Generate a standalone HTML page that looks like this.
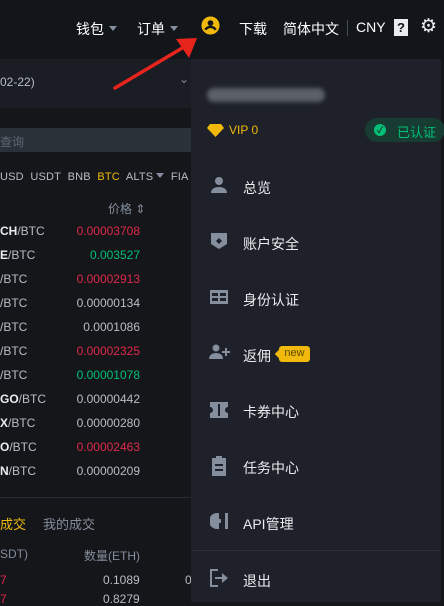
<!DOCTYPE html>
<html><head><meta charset="utf-8"><style>
*{margin:0;padding:0;box-sizing:border-box}
body{width:444px;height:602px;overflow:hidden;background:#14161a;font-family:"Liberation Sans","Noto Sans CJK SC",sans-serif;position:relative;color:#eaecef}
.a{position:absolute;white-space:nowrap}
.top{left:0;top:0;width:444px;height:59px;background:#12151a}
.nav{top:19px;font-size:14px;color:#fff}
.tri{display:inline-block;width:0;height:0;border-left:4px solid transparent;border-right:4px solid transparent;border-top:5px solid #848e9c;vertical-align:middle;margin-left:5px;margin-top:-3px}
.row{left:0;font-size:12px;color:#b7bdc6;width:180px}
.row b{color:#eaecef;font-weight:bold}
.row span{position:absolute;right:40px}
.r{color:#e0294a}.g{color:#02c076}.w{color:#b7bdc6}
.panel{left:191px;top:59px;width:250px;height:543px;background:#1e2129}
.mi{left:243px;font-size:14px;color:#eaecef}
.ic{position:absolute;left:210px}
</style></head><body>
<div class="a top"></div>
<div class="a nav" style="left:76px">钱包<span class="tri"></span></div>
<div class="a nav" style="left:137px">订单<span class="tri"></span></div>
<svg class="a" style="left:201px;top:16px" width="19" height="19" viewBox="0 0 20 20"><circle cx="10" cy="10" r="9.5" fill="#f0b90b"/><circle cx="10" cy="7.5" r="3" fill="#12151a"/><path d="M4.5 14.5c1.2-2 3-3 5.5-3s4.3 1 5.5 3" stroke="#12151a" stroke-width="2.5" fill="none"/></svg>
<div class="a nav" style="left:239px">下载</div>
<div class="a nav" style="left:283px">简体中文</div>
<div class="a" style="left:347px;top:20px;width:1px;height:16px;background:#474d57"></div>
<div class="a nav" style="left:356px">CNY</div>
<div class="a" style="left:394px;top:19px;width:14px;height:17px;background:#eaecef;color:#12151a;font-size:13px;font-weight:bold;text-align:center;line-height:17px">?</div>
<div class="a" style="left:420px;top:15px;font-size:19px;color:#eaecef">⚙</div>
<div class="a" style="left:0;top:59px;width:191px;height:49px;background:#1a1d23"></div>
<div class="a" style="left:0;top:75px;font-size:12px;color:#b7bdc6">02-22)</div>
<div class="a" style="left:179px;top:72px;font-size:12px;color:#848e9c">⌄</div>
<div class="a" style="left:0;top:128px;width:191px;height:24px;background:#2b3139"></div>
<div class="a" style="left:0;top:133px;font-size:12px;color:#5e6673">查询</div>
<div class="a" style="left:0;top:171px;font-size:11px;color:#b7bdc6;letter-spacing:.2px">USD&nbsp; USDT&nbsp; BNB&nbsp; <span style="color:#f0b90b">BTC</span>&nbsp; ALTS<span class="tri" style="margin-left:3px"></span>&nbsp; FIA</div>
<div class="a" style="left:108px;top:200px;font-size:12px;color:#848e9c">价格 ⇕</div>
<div class="a row" style="top:224px"><b>CH</b>/BTC<span class="r">0.00003708</span></div>
<div class="a row" style="top:248px"><b>E</b>/BTC<span class="g">0.003527</span></div>
<div class="a row" style="top:272px">/BTC<span class="r">0.00002913</span></div>
<div class="a row" style="top:296px">/BTC<span class="w">0.00000134</span></div>
<div class="a row" style="top:320px">/BTC<span class="w">0.0001086</span></div>
<div class="a row" style="top:344px">/BTC<span class="r">0.00002325</span></div>
<div class="a row" style="top:368px">/BTC<span class="g">0.00001078</span></div>
<div class="a row" style="top:392px"><b>GO</b>/BTC<span class="w">0.00000442</span></div>
<div class="a row" style="top:416px"><b>X</b>/BTC<span class="w">0.00000280</span></div>
<div class="a row" style="top:440px"><b>O</b>/BTC<span class="r">0.00002463</span></div>
<div class="a row" style="top:464px"><b>N</b>/BTC<span class="w">0.00000209</span></div>
<div class="a" style="left:0;top:497px;width:191px;height:1px;background:#262a31"></div>
<div class="a" style="left:0;top:514px;font-size:13px;color:#f0b90b">成交</div>
<div class="a" style="left:43px;top:514px;font-size:13px;color:#848e9c">我的成交</div>
<div class="a" style="left:0;top:547px;font-size:12px;color:#848e9c">SDT)</div>
<div class="a" style="left:84px;top:547px;font-size:12px;color:#848e9c">数量(ETH)</div>
<div class="a" style="left:0;top:573px;font-size:12px;color:#e0294a">7</div>
<div class="a" style="left:103px;top:573px;font-size:12px;color:#b7bdc6">0.1089</div>
<div class="a" style="left:185px;top:573px;font-size:12px;color:#b7bdc6">0</div>
<div class="a" style="left:0;top:592px;font-size:12px;color:#e0294a">7</div>
<div class="a" style="left:103px;top:592px;font-size:12px;color:#b7bdc6">0.8279</div>
<div class="a panel"></div>
<div class="a" style="left:441px;top:59px;width:3px;height:543px;background:#14161a"></div>
<div class="a" style="left:207px;top:88px;width:118px;height:14px;background:#5a5f68;border-radius:7px;filter:blur(2px)"></div>
<svg class="a" style="left:207px;top:124px" width="17" height="13" viewBox="0 0 17 13"><path d="M3 0h11l3 4-8.5 9L0 4z" fill="#f0b90b"/></svg>
<div class="a" style="left:229px;top:123px;font-size:12px;color:#f0b90b">VIP 0</div>
<div class="a" style="left:365px;top:118px;width:80px;height:24px;background:#173d33;border-radius:12px"></div>
<div class="a" style="left:374px;top:124px;width:12px;height:12px;border-radius:6px;background:#02c076;font-size:9px;color:#173d33;text-align:center;line-height:12px;font-weight:bold">✓</div>
<div class="a" style="left:397px;top:122px;font-size:13px;color:#02c076">已认证</div>
<svg class="ic" style="top:176px" width="18" height="18" viewBox="0 0 18 18" fill="#848e9c"><circle cx="9" cy="5" r="4"/><path d="M1 17c0-4 3.5-6 8-6s8 2 8 6z"/></svg>
<div class="a mi" style="top:178px">总览</div>
<svg class="ic" style="top:232px" width="18" height="18" viewBox="0 0 18 18"><path d="M1 1h16v11l-8 5-8-5z" fill="#848e9c"/><path d="M9 6l3 3-3 3-3-3z" fill="#1e2129"/></svg>
<div class="a mi" style="top:234px">账户安全</div>
<svg class="ic" style="top:290px" width="18" height="14" viewBox="0 0 18 14"><rect width="18" height="14" fill="#848e9c"/><rect x="2" y="3" width="6" height="3" fill="#1e2129"/><rect x="10" y="3" width="6" height="3" fill="#1e2129"/><rect x="10" y="8" width="6" height="3" fill="#1e2129"/><rect x="2" y="8" width="6" height="3" fill="#1e2129"/></svg>
<div class="a mi" style="top:290px">身份认证</div>
<svg class="ic" style="left:209px;top:344px" width="22" height="16" viewBox="0 0 22 16" fill="#848e9c"><circle cx="7" cy="4" r="3.5"/><path d="M0 15c0-4 3-6 7-6s7 2 7 6z"/><path d="M16 4h2v3h3v2h-3v3h-2V9h-3V7h3z"/></svg>
<div class="a mi" style="top:346px">返佣</div>
<div class="a" style="left:279px;top:346px;width:31px;height:16px;background:#f0b90b;border-radius:3px;font-size:11px;color:#5a4a00;text-align:center;line-height:15px">new</div>
<div class="a" style="left:276px;top:351px;width:6px;height:6px;background:#f0b90b;transform:rotate(45deg)"></div>
<svg class="ic" style="top:402px" width="18" height="16" viewBox="0 0 18 16"><path d="M0 0h18v5a3 3 0 0 0 0 6v5H0v-5a3 3 0 0 0 0-6z" fill="#848e9c"/><rect x="8" y="2" width="2" height="12" fill="#1e2129"/></svg>
<div class="a mi" style="top:402px">卡券中心</div>
<svg class="ic" style="left:212px;top:456px" width="14" height="20" viewBox="0 0 14 20"><rect y="2" width="14" height="18" fill="#848e9c"/><rect x="4" y="0" width="6" height="3" fill="#848e9c"/><rect x="3" y="8" width="8" height="2" fill="#1e2129"/><rect x="3" y="13" width="8" height="2" fill="#1e2129"/></svg>
<div class="a mi" style="top:458px">任务中心</div>
<svg class="ic" style="top:513px" width="18" height="16" viewBox="0 0 18 16" fill="#848e9c"><path d="M9 0v16H7a8 8 0 0 1 0-16z"/><rect x="8" y="6" width="3" height="4"/><rect x="15" y="0" width="3" height="16"/></svg>
<div class="a mi" style="top:514px">API管理</div>
<div class="a" style="left:191px;top:550px;width:250px;height:1px;background:#2b2f36"></div>
<svg class="ic" style="top:569px" width="19" height="18" viewBox="0 0 19 18" fill="#848e9c"><path d="M0 0h8v2H2v14h6v2H0z"/><path d="M5 8h7V4l6 5-6 5v-4H5z"/></svg>
<div class="a mi" style="top:571px">退出</div>
<svg class="a" style="left:100px;top:25px;z-index:10" width="110" height="70"><path d="M15 63 L84 22" stroke="#e8251c" stroke-width="3.5" stroke-linecap="round"/><path d="M97 13 L76 14 L89 33 Z" fill="#e8251c"/></svg>
</body></html>
